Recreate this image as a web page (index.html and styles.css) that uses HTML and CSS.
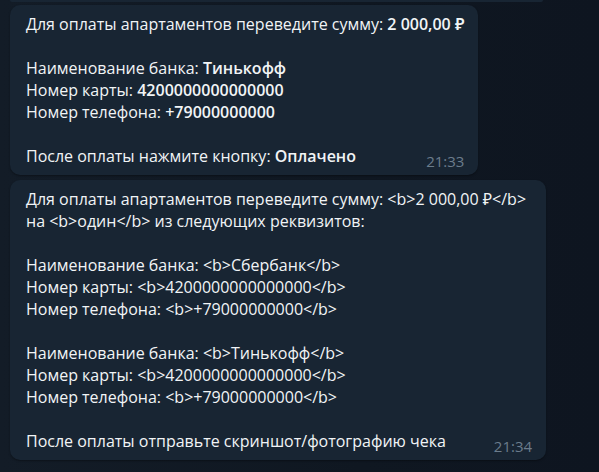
FILE: index.html
```html
<!DOCTYPE html>
<html lang="ru">
<head>
<meta charset="utf-8">
<link rel="stylesheet" href="styles.css">
</head>
<body>
<div class="chat">
  <div class="prev"></div>
  <div class="bubble b1">
    <div class="line">Для оплаты апартаментов переведите сумму: <b>2 000,00 ₽</b></div>
    <div class="line empty"></div>
    <div class="line">Наименование банка: <b>Тинькофф</b></div>
    <div class="line">Номер карты: <b>4200000000000000</b></div>
    <div class="line">Номер телефона: <b>+79000000000</b></div>
    <div class="line empty"></div>
    <div class="last">
      <div class="line">После оплаты нажмите кнопку: <b>Оплачено</b></div>
      <span class="time">21:33</span>
    </div>
  </div>
  <div class="bubble b2">
    <div class="line">Для оплаты апартаментов переведите сумму: &lt;b&gt;2 000,00 ₽&lt;/b&gt;</div>
    <div class="line">на &lt;b&gt;один&lt;/b&gt; из следующих реквизитов:</div>
    <div class="line empty"></div>
    <div class="line">Наименование банка: &lt;b&gt;Сбербанк&lt;/b&gt;</div>
    <div class="line">Номер карты: &lt;b&gt;4200000000000000&lt;/b&gt;</div>
    <div class="line">Номер телефона: &lt;b&gt;+79000000000&lt;/b&gt;</div>
    <div class="line empty"></div>
    <div class="line">Наименование банка: &lt;b&gt;Тинькофф&lt;/b&gt;</div>
    <div class="line">Номер карты: &lt;b&gt;4200000000000000&lt;/b&gt;</div>
    <div class="line">Номер телефона: &lt;b&gt;+79000000000&lt;/b&gt;</div>
    <div class="line empty"></div>
    <div class="last">
      <div class="line">После оплаты отправьте скриншот/фотографию чека</div>
      <span class="time">21:34</span>
    </div>
  </div>
</div>
</body>
</html>
```
FILE: styles.css
```css
html, body {
  margin: 0;
  padding: 0;
  height: 100%;
}
body {
  background: linear-gradient(90deg, #131c27 0%, #0f1721 60%, #0e1520 100%);
  font-family: "Open Sans", "Noto Sans", "DejaVu Sans", sans-serif;
  font-size: 16px;
  color: #f1f4f6;
  overflow: hidden;
}
.chat {
  display: flex;
  flex-direction: column;
  align-items: flex-start;
  padding-left: 10px;
}
.prev {
  width: 533px;
  height: 2px;
  background: #182533;
  border-radius: 0 0 10px 10px;
  margin-bottom: 3px;
}
.bubble {
  background: #182533;
  border-radius: 10px;
  padding: 8px 14px 8px 16px;
  box-shadow: 0 1px 2px rgba(0, 0, 0, 0.35);
}
.b2 {
  margin-top: 5px;
}
.line {
  line-height: 22px;
  white-space: pre;
}
.line.empty {
  height: 22px;
}
.line b {
  font-weight: 600;
}
.last {
  display: flex;
  align-items: baseline;
  justify-content: space-between;
  gap: 48px;
}
.time {
  font-size: 15px;
  color: #6b7c8c;
  position: relative;
  top: 5px;
  line-height: 22px;
}
```
